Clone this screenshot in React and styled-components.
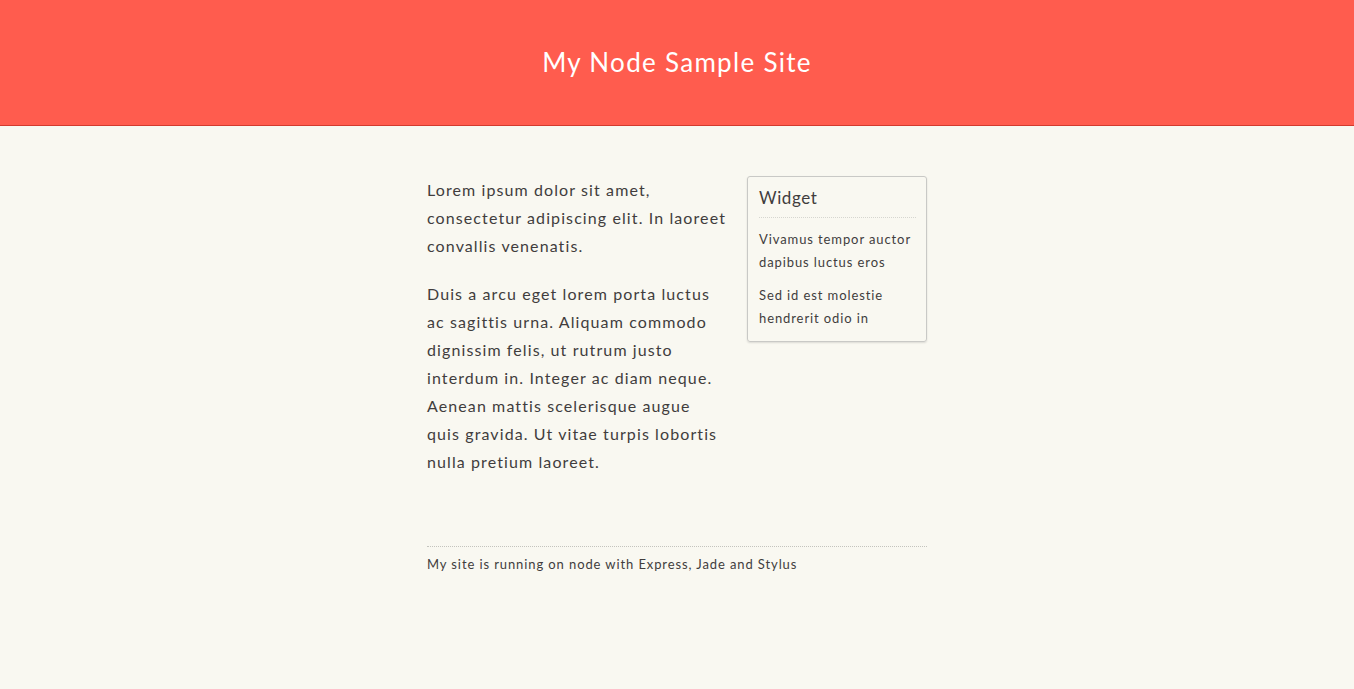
import React from 'react'
import styled, { createGlobalStyle } from 'styled-components'

const GlobalStyle = createGlobalStyle`
  html, body {
    margin: 0;
    padding: 0;
    background: #f9f8f1;
  }
  body {
    font-family: 'Lato', 'Open Sans', sans-serif;
    color: #413d3d;
  }
`

const Header = styled.header`
  height: 125px;
  background: #ff5c4e;
  border-bottom: 1px solid #d23a2e;
  display: flex;
  justify-content: center;
  align-items: flex-start;
`

const Title = styled.h1`
  margin: 44px 0 0;
  font-size: 26px;
  line-height: 36px;
  font-weight: 400;
  color: #fff;
  letter-spacing: 1.3px;
`

const Container = styled.div`
  width: 500px;
  margin: 0 auto;
  padding-top: 50px;
`

const Columns = styled.div`
  display: flex;
  gap: 20px;
  align-items: flex-start;
`

const Main = styled.div`
  width: 300px;
`

const Para = styled.p`
  margin: 0 0 20px;
  font-size: 16px;
  line-height: 28px;
  letter-spacing: 1.1px;
  &:last-child { margin-bottom: 0; }
`

const Widget = styled.aside`
  width: 180px;
  box-sizing: border-box;
  padding: 8px 10px 11px 11px;
  border: 1px solid #c9c9c6;
  border-radius: 3px;
  box-shadow: 0 1px 2px rgba(0, 0, 0, 0.12);
`

const WidgetTitle = styled.h3`
  margin: 0 0 10px;
  padding-bottom: 6px;
  font-size: 17px;
  line-height: 26px;
  font-weight: 400;
  letter-spacing: 0.6px;
  border-bottom: 1px dotted #d6d6d0;
`

const WidgetText = styled.p`
  margin: 0 0 10px;
  font-size: 13px;
  line-height: 23px;
  letter-spacing: 0.9px;
  &:last-child { margin-bottom: 0; }
`

const Footer = styled.footer`
  margin-top: 70px;
  border-top: 1px dotted #c4c4be;
  padding-top: 7px;
  font-size: 13px;
  line-height: 20px;
  letter-spacing: 0.9px;
`

export default function App() {
  return (
    <>
      <GlobalStyle />
      <Header>
        <Title>My Node Sample Site</Title>
      </Header>
      <Container>
        <Columns>
          <Main>
            <Para>Lorem ipsum dolor sit amet, consectetur adipiscing elit. In laoreet convallis venenatis.</Para>
            <Para>Duis a arcu eget lorem porta luctus ac sagittis urna. Aliquam commodo dignissim felis, ut rutrum justo interdum in. Integer ac diam neque. Aenean mattis scelerisque augue quis gravida. Ut vitae turpis lobortis nulla pretium laoreet.</Para>
          </Main>
          <Widget>
            <WidgetTitle>Widget</WidgetTitle>
            <WidgetText>Vivamus tempor auctor dapibus luctus eros</WidgetText>
            <WidgetText>Sed id est molestie hendrerit odio in</WidgetText>
          </Widget>
        </Columns>
        <Footer>My site is running on node with Express, Jade and Stylus</Footer>
      </Container>
    </>
  )
}
